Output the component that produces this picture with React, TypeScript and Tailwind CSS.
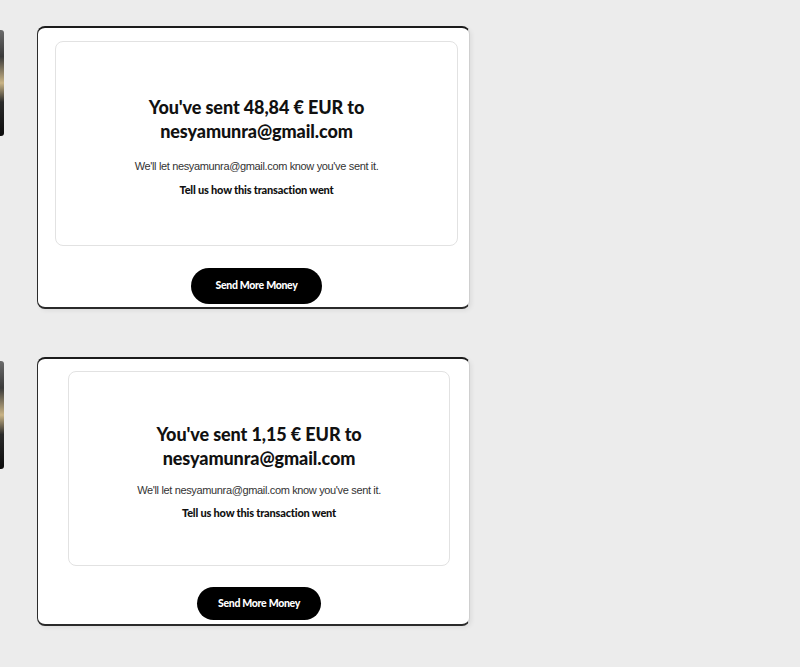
const sans = { fontFamily: "'Liberation Sans', Arial, sans-serif" }

function Thumb({ height }: { height: string }) {
  return (
    <div
      className={`w-[4px] ${height} mt-[4px] rounded-r-[3px] bg-[linear-gradient(180deg,#6b6b6b_0%,#3a3a3a_25%,#c9b486_50%,#2a2a2a_68%,#0c0c0c_100%)]`}
    />
  )
}

type Props = {
  amount: string
  inner: string
  sub: string
  tell: string
  btn: string
  cardH: string
}

function SentCard({ amount, inner, sub, tell, btn, cardH }: Props) {
  return (
    <div
      className={`ml-[33px] w-[433px] ${cardH} bg-white rounded-lg border-t-2 border-b-2 border-l border-r border-t-[#1c1c1c] border-b-[#2a2a2a] border-l-[#2c2c2c] border-r-[#cfcfcf] shadow-[2px_2px_4px_rgba(0,0,0,0.06)] flex flex-col`}
    >
      <div className={`${inner} border border-[#e2e2e2] rounded-lg flex flex-col items-center text-center`}>
        <h2
          className="text-[18px] leading-[24px] font-black text-[#111] tracking-[-0.1px]"
          style={{ fontFamily: "Lato, 'Noto Sans', sans-serif" }}
        >
          You've sent {amount} € EUR to
          <br />
          nesyamunra@gmail.com
        </h2>
        <p className={`${sub} text-[11px] leading-[14px] text-[#333] tracking-[-0.35px]`} style={sans}>
          We'll let nesyamunra@gmail.com know you've sent it.
        </p>
        <p
          className={`${tell} text-[11px] leading-[14px] font-black text-[#111] tracking-[-0.2px]`}
          style={{ fontFamily: "Lato, sans-serif" }}
        >
          Tell us how this transaction went
        </p>
      </div>
      <div className={`flex ${btn}`}>
        <button
          className="mx-auto rounded-full bg-black text-white font-black text-[10.5px] tracking-[-0.3px] flex items-center justify-center"
          style={{ fontFamily: "Lato, sans-serif" }}
        >
          Send More Money
        </button>
      </div>
    </div>
  )
}

export default function App() {
  return (
    <div className="min-h-[667px] w-[800px] bg-[#ececec] pt-[26px]">
      <div className="flex">
        <Thumb height="h-[106px]" />
        <SentCard
          amount="48,84"
          cardH="h-[283px]"
          inner="ml-[17px] mr-[11px] mt-[13px] h-[205px] pt-[53px]"
          sub="mt-[16px]"
          tell="mt-[10px]"
          btn="mt-[22px] pl-[6px] [&>button]:w-[131px] [&>button]:h-[36px]"
        />
      </div>
      <div className="flex mt-[48px]">
        <Thumb height="h-[108px]" />
        <SentCard
          amount="1,15"
          cardH="h-[269px]"
          inner="ml-[30px] mr-[19px] mt-[12px] h-[195px] pt-[50px]"
          sub="mt-[13px]"
          tell="mt-[9px]"
          btn="mt-[21px] pl-[11px] [&>button]:w-[124px] [&>button]:h-[33px]"
        />
      </div>
    </div>
  )
}
